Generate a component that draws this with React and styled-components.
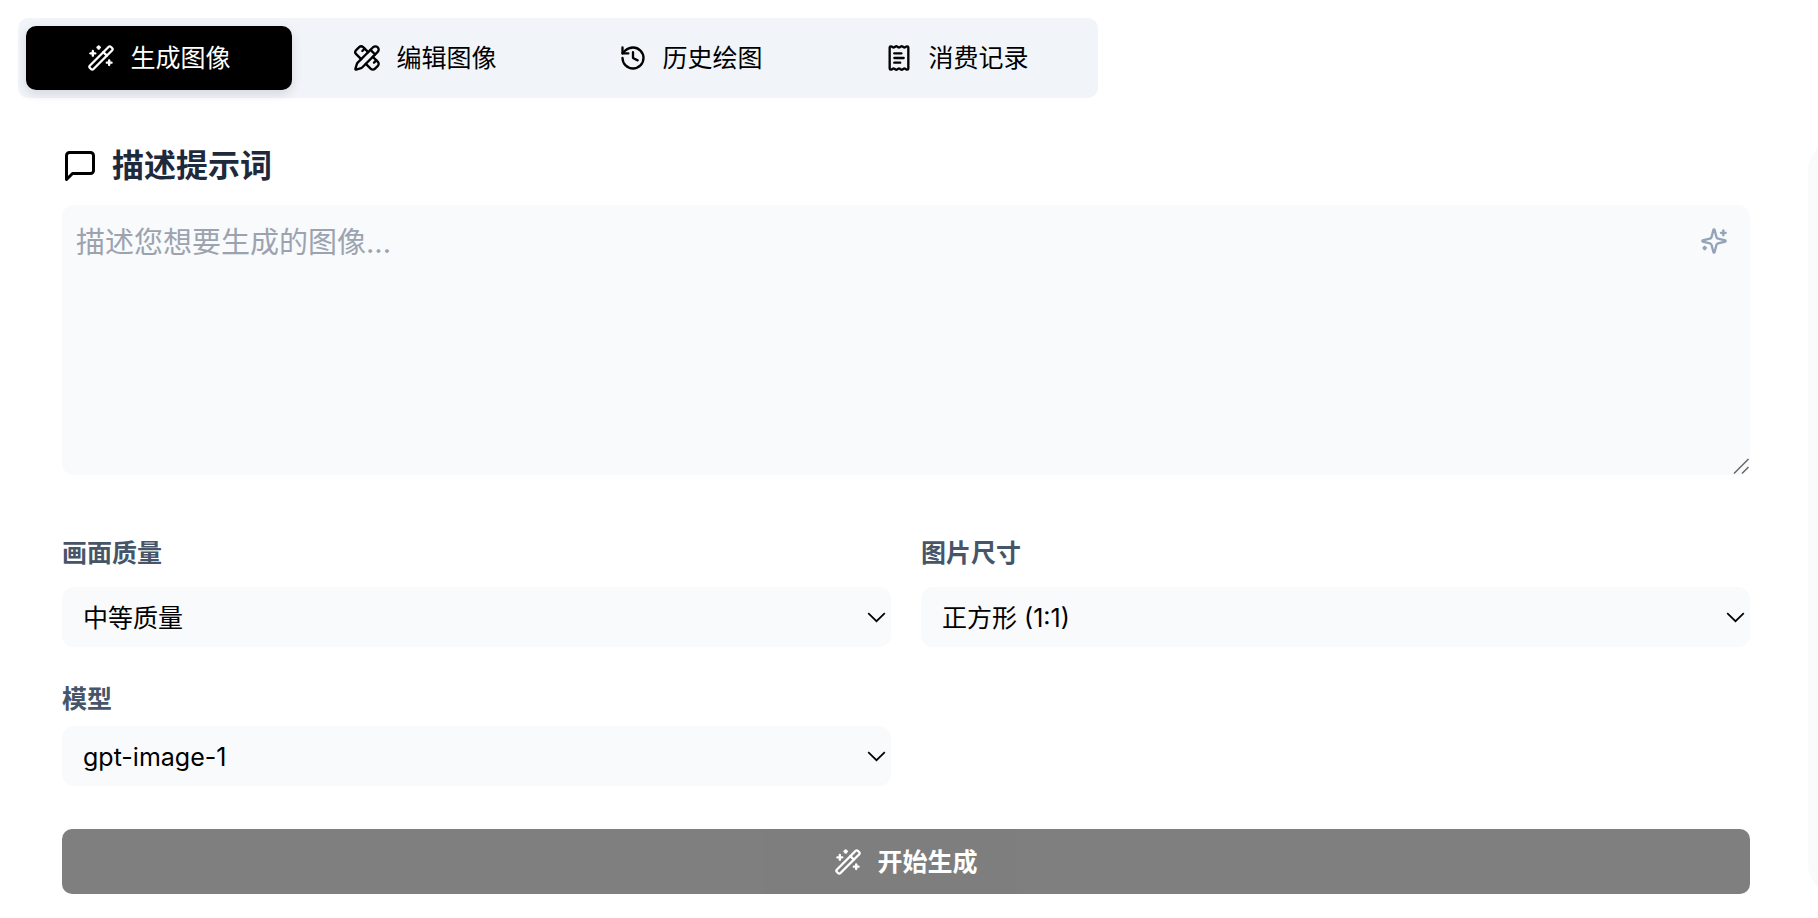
import React, { useState } from 'react';
import styled, { createGlobalStyle } from 'styled-components';
import { History, PencilRuler, ReceiptText, WandSparkles } from 'lucide-react';

const colors = {
  ink: '#000000',
  heading: '#1e293b',
  label: '#475569',
  muted: '#94a3b8',
  placeholder: '#9ca3af',
  bar: '#f1f5f9',
  field: '#f8fafc',
};

const GlobalStyle = createGlobalStyle`
  *, *::before, *::after {
    box-sizing: border-box;
  }
  body {
    margin: 0;
    background: #fff;
    color: ${colors.ink};
    font-family: Inter, 'Noto Sans CJK SC', sans-serif;
    font-size: 25px;
    line-height: 38px;
  }
  button, select, textarea {
    font: inherit;
    color: inherit;
    border: 0;
    outline: none;
  }
`;

const Page = styled.div`
  padding: 18px 0 24px 18px;
  overflow: hidden;
`;

const TabBar = styled.nav`
  display: grid;
  grid-template-columns: repeat(4, 1fr);
  max-width: 1080px;
  padding: 8px;
  margin-right: 18px;
  border-radius: 10px;
  background: ${colors.bar};
`;

const Tab = styled.button`
  display: flex;
  align-items: center;
  justify-content: center;
  gap: 15px;
  height: 64px;
  padding: 0;
  border-radius: 10px;
  cursor: pointer;
  color: ${props => (props.$active ? '#fff' : colors.ink)};
  background: ${props => (props.$active ? colors.ink : 'transparent')};
  box-shadow: ${props => (props.$active ? '0 4px 12px rgba(0, 0, 0, 0.12)' : 'none')};
`;

const Content = styled.main`
  display: grid;
  grid-template-columns: minmax(0, 1fr) 10px;
  column-gap: 58px;
  margin-top: 43px;
  padding-left: 44px;
`;

const Form = styled.form`
  display: flex;
  flex-direction: column;
`;

const Heading = styled.label`
  display: flex;
  align-items: center;
  gap: 14px;
  height: 50px;
  margin-bottom: 14px;
  font-size: 32px;
  font-weight: 600;
  color: ${colors.heading};
  svg {
    color: ${colors.ink};
  }
`;

const PromptBox = styled.div`
  position: relative;
  display: flex;
`;

const Prompt = styled.textarea`
  width: 100%;
  height: 270px;
  padding: 16px 72px 14px 14px;
  border-radius: 12px;
  background: ${colors.field};
  font-size: 29px;
  line-height: 44px;
  resize: vertical;
  &::placeholder {
    color: ${colors.placeholder};
  }
  &::-webkit-resizer {
    display: none;
  }
`;

const EnhanceButton = styled.button`
  position: absolute;
  top: 22px;
  right: 22px;
  display: flex;
  padding: 0;
  background: none;
  color: ${colors.muted};
  cursor: pointer;
`;

const ResizeGrip = styled.svg`
  position: absolute;
  right: 0;
  bottom: 0;
  pointer-events: none;
`;

const Options = styled.div`
  display: grid;
  grid-template-columns: repeat(2, minmax(0, 1fr));
  gap: 33px 30px;
  margin: 59px 0 43px;
`;

const Field = styled.div`
  display: flex;
  flex-direction: column;
  gap: ${props => (props.$tight ? '8px' : '15px')};
`;

const FieldLabel = styled.label`
  font-weight: 600;
  color: ${colors.label};
`;

const SelectBox = styled.div`
  position: relative;
  display: flex;
  svg {
    position: absolute;
    top: 25px;
    right: 5px;
    pointer-events: none;
  }
`;

const Select = styled.select`
  width: 100%;
  height: 60px;
  padding: 2px 36px 0 21px;
  border-radius: 12px;
  background: ${colors.field};
  appearance: none;
`;

const SubmitButton = styled.button`
  display: flex;
  align-items: center;
  justify-content: center;
  gap: 15px;
  height: 65px;
  border-radius: 10px;
  background: ${colors.ink};
  color: #fff;
  font-weight: 600;
  &:disabled {
    opacity: 0.5;
  }
`;

// the preview starts at the window's edge and runs on past it
const Preview = styled.aside`
  width: 600px;
  border-radius: 29px;
  background: ${colors.field};
`;

const MessageIcon = () => (
  <svg width="36" height="36" viewBox="0 0 24 24" fill="none" stroke="currentColor" strokeWidth="2" strokeLinecap="round" strokeLinejoin="round">
    <path d="M21 15a2 2 0 0 1-2 2H7l-4 4V5a2 2 0 0 1 2-2h14a2 2 0 0 1 2 2z" />
  </svg>
);

const SparklesIcon = () => (
  <svg width="28" height="28" viewBox="0 0 24 24" fill="none" stroke="currentColor" strokeWidth="2" strokeLinecap="round" strokeLinejoin="round">
    <path d="M9.937 15.5A2 2 0 0 0 8.5 14.063l-6.135-1.582a.5.5 0 0 1 0-.962L8.5 9.936A2 2 0 0 0 9.937 8.5l1.582-6.135a.5.5 0 0 1 .963 0L14.063 8.5A2 2 0 0 0 15.5 9.937l6.135 1.581a.5.5 0 0 1 0 .964L15.5 14.063a2 2 0 0 0-1.437 1.437l-1.582 6.135a.5.5 0 0 1-.963 0z" />
    <path d="M20 3v4" />
    <path d="M22 5h-4" />
    <path d="M4 17v2" />
    <path d="M5 18H3" />
  </svg>
);

const ChevronIcon = () => (
  <svg width="19" height="12" viewBox="0 0 19 12" fill="none" stroke="currentColor" strokeWidth="1.7">
    <path d="M1.2 1.2l8.3 8 8.3-8" />
  </svg>
);

const tabs = [
  { id: 'generate', text: '生成图像', Icon: WandSparkles },
  { id: 'edit', text: '编辑图像', Icon: PencilRuler },
  { id: 'history', text: '历史绘图', Icon: History },
  { id: 'billing', text: '消费记录', Icon: ReceiptText },
];

const fields = [
  { id: 'quality', text: '画面质量', options: ['中等质量', '高质量', '低质量'] },
  { id: 'size', text: '图片尺寸', options: ['正方形 (1:1)', '横向 (3:2)', '纵向 (2:3)'] },
  { id: 'model', text: '模型', options: ['gpt-image-1'], tight: true },
];

const SelectField = ({ id, text, options, tight }) => (
  <Field $tight={tight}>
    <FieldLabel htmlFor={id}>{text}</FieldLabel>
    <SelectBox>
      <Select id={id}>
        {options.map(option => <option key={option}>{option}</option>)}
      </Select>
      <ChevronIcon />
    </SelectBox>
  </Field>
);

const App = () => {
  const [activeTab, setActiveTab] = useState('generate');
  const [prompt, setPrompt] = useState('');

  return (
    <Page>
      <GlobalStyle />
      <TabBar>
        {tabs.map(({ id, text, Icon }) => (
          <Tab key={id} type="button" $active={id === activeTab} onClick={() => setActiveTab(id)}>
            <Icon size={28} />
            {text}
          </Tab>
        ))}
      </TabBar>
      <Content>
        <Form onSubmit={e => e.preventDefault()}>
          <Heading htmlFor="prompt">
            <MessageIcon />
            描述提示词
          </Heading>
          <PromptBox>
            <Prompt
              id="prompt"
              placeholder="描述您想要生成的图像..."
              value={prompt}
              onChange={e => setPrompt(e.target.value)}
            />
            <EnhanceButton type="button" aria-label="优化提示词">
              <SparklesIcon />
            </EnhanceButton>
            <ResizeGrip width="18" height="18" viewBox="0 0 18 18" fill="none" stroke="#666" strokeWidth="1.5">
              <path d="M2 16.5L16.5 2M10 16.5l6.5-6.5" />
            </ResizeGrip>
          </PromptBox>
          <Options>
            {fields.map(field => <SelectField key={field.id} {...field} />)}
          </Options>
          <SubmitButton type="submit" disabled={!prompt}>
            <WandSparkles size={28} />
            开始生成
          </SubmitButton>
        </Form>
        <Preview />
      </Content>
    </Page>
  );
};

export default App;
